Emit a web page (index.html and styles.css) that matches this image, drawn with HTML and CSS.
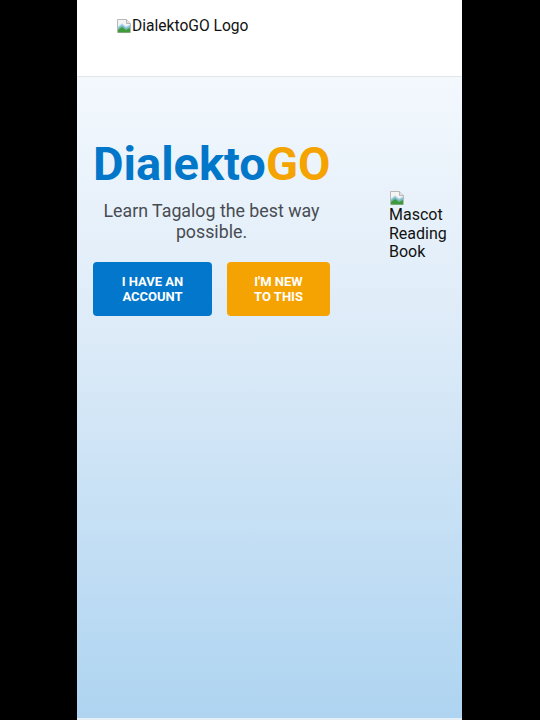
FILE: index.html
```html
<!DOCTYPE html>
<html lang="en">
<head>
<meta charset="utf-8">
<title>DialektoGO</title>
<link rel="stylesheet" href="styles.css">
</head>
<body>
<div class="page">
  <header class="header">
    <div class="logo">
      <svg class="broken" viewBox="0 0 16 16" width="16" height="16" aria-hidden="true">
        <path d="M1.5 1.5h9l4 4v9h-13z" fill="#f4f4f4" stroke="#b8b8b8"/>
        <path d="M10.5 1.5v4h4" fill="#e4e4e4" stroke="#b8b8b8"/>
        <path d="M2 10l4-3 4 3 4-2v6.5H2z" fill="#3f9a3a"/>
        <path d="M2 8.5l4-3 4 3 4-2V10L10 12 6 9 2 12z" fill="#8fc7ef" opacity="0.7"/>
      </svg>
      <span class="alt">DialektoGO Logo</span>
    </div>
  </header>
  <main class="main">
    <section class="hero">
      <div class="intro">
        <h1 class="title"><span class="t-blue">Dialekto</span><span class="t-orange">GO</span></h1>
        <p class="tagline">Learn Tagalog the best way possible.</p>
        <div class="actions">
          <button class="btn btn-blue">I HAVE AN ACCOUNT</button>
          <button class="btn btn-orange">I'M NEW TO THIS</button>
        </div>
      </div>
      <div class="mascot">
        <svg class="broken" viewBox="0 0 16 16" width="16" height="16" aria-hidden="true">
          <path d="M1.5 1.5h9l4 4v9h-13z" fill="#f4f4f4" stroke="#b8b8b8"/>
          <path d="M10.5 1.5v4h4" fill="#e4e4e4" stroke="#b8b8b8"/>
          <path d="M2 10l4-3 4 3 4-2v6.5H2z" fill="#3f9a3a"/>
          <path d="M2 8.5l4-3 4 3 4-2V10L10 12 6 9 2 12z" fill="#8fc7ef" opacity="0.7"/>
        </svg>
        <span class="alt">Mascot Reading Book</span>
      </div>
    </section>
  </main>
</div>
</body>
</html>
```
FILE: styles.css
```css
* { box-sizing: border-box; }
html, body { margin: 0; height: 100%; }
body {
  background: #000;
  font-family: Roboto, "Noto Sans", "Liberation Sans", sans-serif;
  display: grid;
  grid-template-columns: 77px 385px 1fr;
}
.page {
  grid-column: 2;
  display: flex;
  flex-direction: column;
  height: 720px;
  background: #fff;
}
.header {
  height: 77px;
  flex: none;
  background: #fff;
  border-bottom: 1px solid #e4e6ea;
  padding: 18px 0 0 39px;
}
.logo {
  display: flex;
  align-items: flex-start;
  font-size: 15.6px;
  line-height: 17px;
  color: #111;
}
.broken { display: block; flex: none; }
.main {
  flex: 1;
  background: linear-gradient(180deg, #f3f8fd 0%, #ddebf8 40%, #aed4f1 100%);
  border-bottom: 2px solid #e6eef6;
  padding: 60px 16px 0 16px;
}
.hero {
  display: flex;
  align-items: flex-start;
}
.intro {
  width: 237px;
  text-align: center;
}
.title {
  margin: 0;
  font-size: 47px;
  line-height: 54px;
  font-weight: 700;
}
.t-blue { color: #0277c9; }
.t-orange { color: #f4a300; }
.tagline {
  margin: 9px 0 0;
  font-size: 17.8px;
  line-height: 21px;
  color: #484c52;
}
.actions {
  display: flex;
  gap: 15px;
  margin-top: 20px;
}
.btn {
  border: none;
  border-radius: 4px;
  height: 54px;
  color: #fff;
  font-family: Roboto, "Noto Sans", "Liberation Sans", sans-serif;
  font-weight: 700;
  font-size: 13px;
  line-height: 15.5px;
  padding: 0 14px;
  text-align: center;
}
.btn-blue { background: #0277cc; width: 119px; }
.btn-orange { background: #f5a302; width: 103px; padding: 0 18px; }
.mascot {
  margin: 53px 0 0 59px;
  width: 62px;
  font-size: 16px;
  line-height: 18.5px;
  color: #111;
}
.mascot .alt { display: block; }
```
